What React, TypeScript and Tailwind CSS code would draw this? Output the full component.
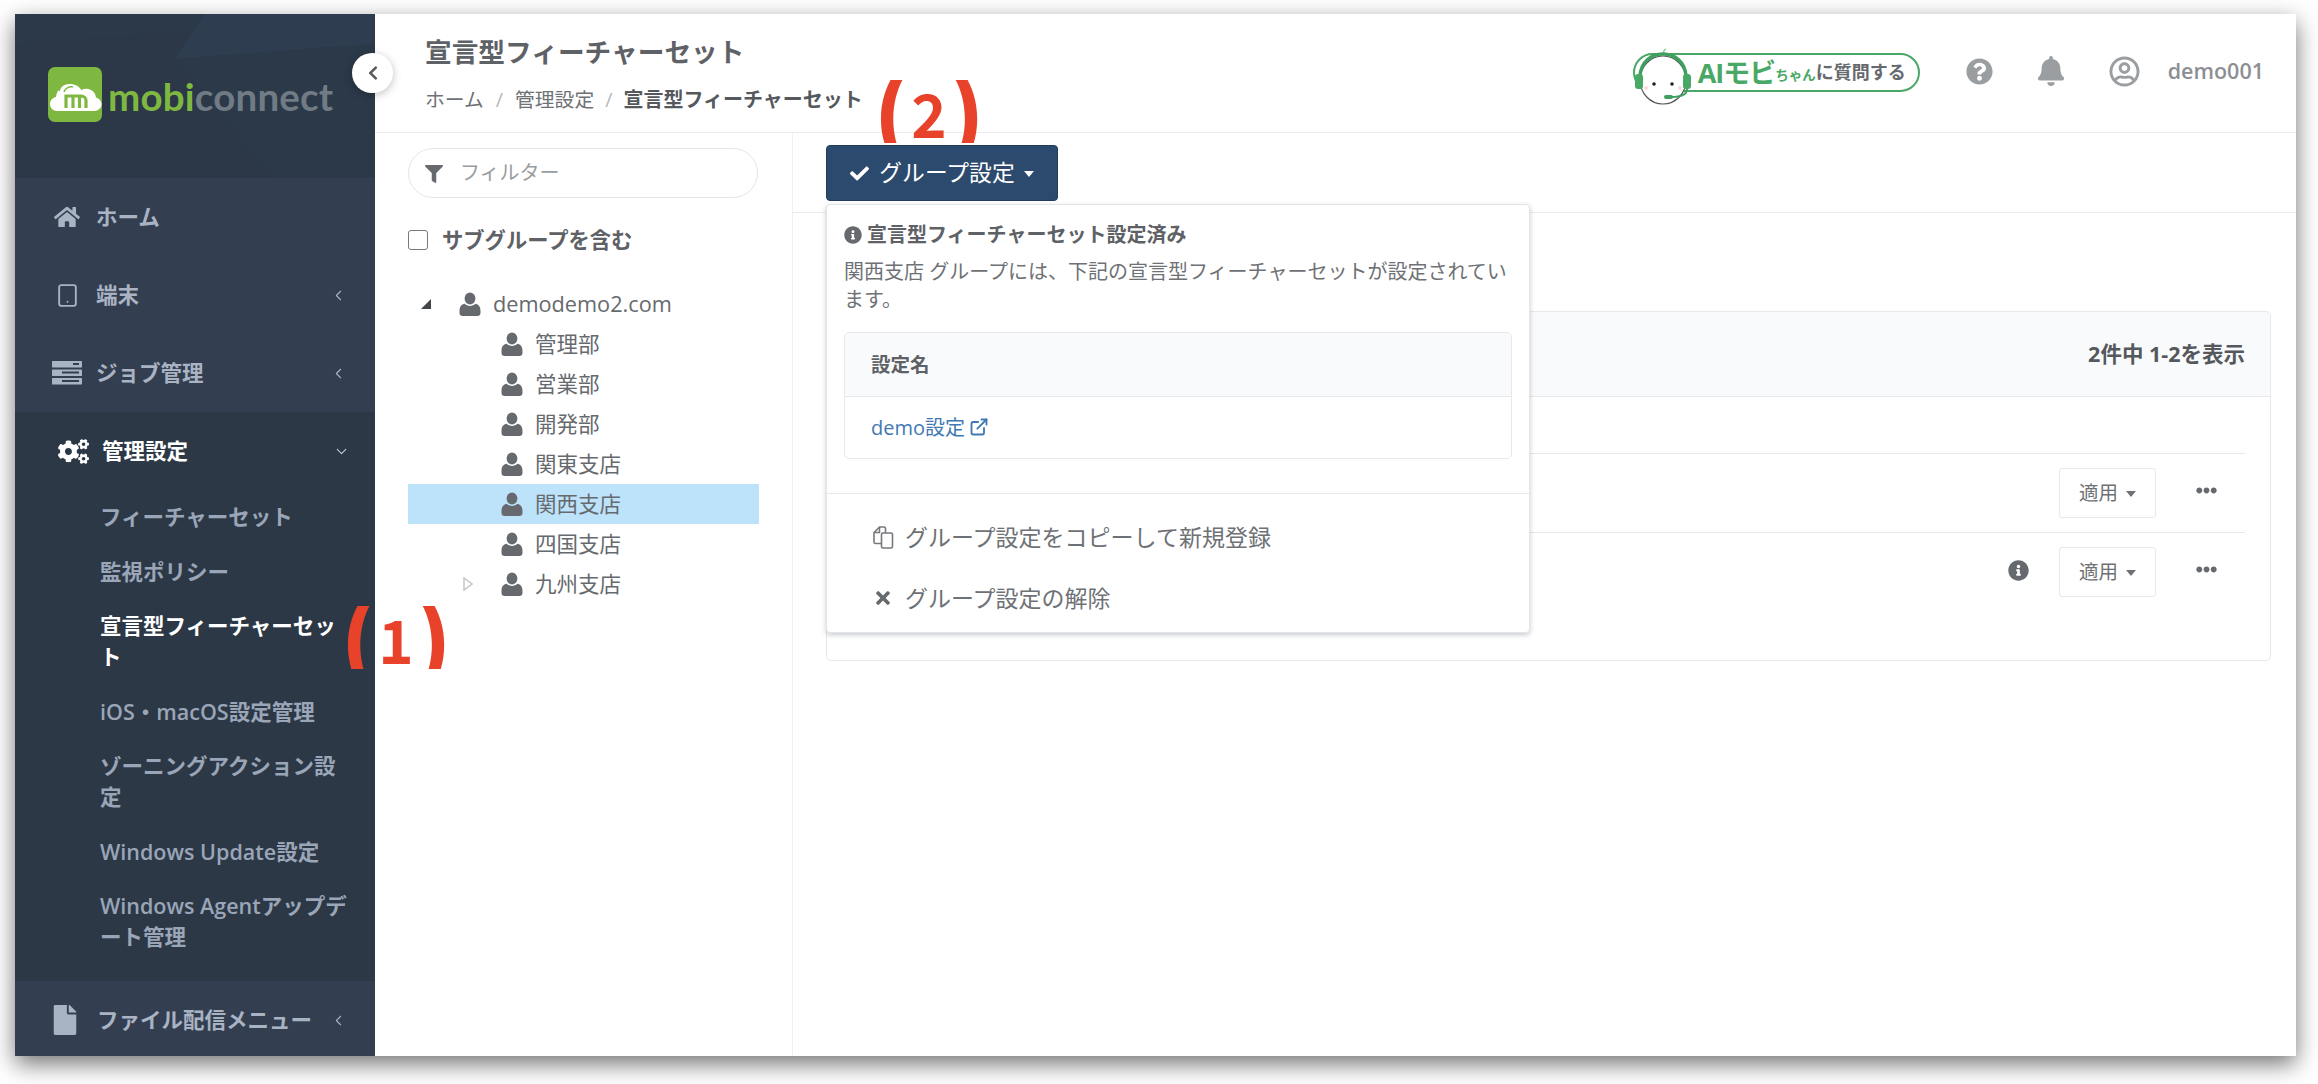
import React from 'react'
import { ChevronDown, ChevronLeft, ExternalLink, Tablet } from 'lucide-react'
import {
  FaBell,
  FaCheck,
  FaChevronLeft,
  FaCogs,
  FaEllipsisH,
  FaFile,
  FaFilter,
  FaHome,
  FaInfoCircle,
  FaQuestionCircle,
  FaRegUserCircle,
  FaTimes,
} from 'react-icons/fa'

const subItems = [
  { label: 'フィーチャーセット' },
  { label: '監視ポリシー' },
  { label: '宣言型フィーチャーセット', active: true },
  { label: 'iOS・macOS設定管理' },
  { label: 'ゾーニングアクション設定' },
  { label: 'Windows Update設定' },
  { label: 'Windows Agentアップデート管理' },
]

const groups = ['管理部', '営業部', '開発部', '関東支店', '関西支店', '四国支店', '九州支店']

function PersonIcon() {
  return (
    <svg viewBox="0 0 24 24" className="h-[24px] w-[24px] shrink-0 fill-[#666a6e]">
      <ellipse cx="12" cy="6.5" rx="5.4" ry="6" />
      <path d="M1.5 19c0-4.5 2-6.6 5.2-7.2 1.3 1.4 3.2 2.1 5.3 2.1s4-.7 5.3-2.1c3.2.6 5.2 2.7 5.2 7.2v2c0 1.7-1.3 3-3 3h-15c-1.7 0-3-1.3-3-3z" />
    </svg>
  )
}

function ServerIcon() {
  return (
    <svg viewBox="0 0 30 24" className="h-[24px] w-[30px] fill-[#a9b3c4]">
      <rect x="0" y="0" width="30" height="6.5" rx="0.6" />
      <rect x="0" y="8.5" width="30" height="6.5" rx="0.6" />
      <rect x="0" y="17" width="30" height="6.5" rx="0.6" />
      <rect x="21" y="2" width="6" height="2" fill="#333f50" />
      <rect x="10" y="10.5" width="17" height="2" fill="#333f50" />
      <rect x="10" y="19" width="17" height="2" fill="#333f50" />
    </svg>
  )
}

function CopyIcon() {
  return (
    <svg viewBox="0 0 24 24" className="mr-[10px] h-[24px] w-[24px] fill-none stroke-[#777a7d] stroke-[1.6]">
      <rect x="10.500" y="8" width="11" height="15" rx="1.500" />
      <path d="M14.500 8V3.500A1.500 1.500 0 0 0 13 2H8.500L3 7.500V17a1.500 1.500 0 0 0 1.500 1.500h6M8.500 2v5.500H3" />
    </svg>
  )
}

function LogoMark() {
  return (
    <div className="flex h-[55px] w-[54px] shrink-0 items-center justify-center rounded-[7px] bg-[#7fb840]">
      <svg viewBox="0 0 54 55" className="h-[55px] w-[54px]">
        <path
          d="M9 44c-4 0-7-3-7-7 0-3.500 2.500-6.300 6-7 .5-7 6.500-13 14-13 5 0 9 2.200 11.500 6 1.500-.8 3-1.200 4.800-1.200 5.200 0 9.200 3.700 9.700 8.700 3.300 1 5.500 3.700 5.500 6.800 0 4-3.500 6.700-7.500 6.700z"
          fill="#fff"
        />
        <path
          d="M18 41V29h15c3 0 5 2 5 4.500V41M25 41V30M31.500 41V30"
          fill="none"
          stroke="#7fb840"
          strokeWidth="3.200"
        />
        <path d="M11 24c2-7 8-11 15-9M16 25c1-3.500 5-6 9-5" fill="none" stroke="#7fb840" strokeWidth="1.500" />
      </svg>
    </div>
  )
}

function MobiFace() {
  return (
    <svg viewBox="0 0 60 64" className="absolute left-[-2px] top-[-9px] h-[64px] w-[60px]">
      <path d="M31 8c-1-2 0-4 2-5" fill="none" stroke="#8fd19e" strokeWidth="1.500" />
      <ellipse cx="30" cy="34" rx="23" ry="24" fill="#fff" stroke="#555" strokeWidth="1.200" />
      <path d="M7 30C8 16 18 8 30 8s22 8 23 22" fill="none" stroke="#3f9f5f" strokeWidth="3.500" />
      <rect x="2" y="28" width="8" height="15" rx="3" fill="#4aa866" />
      <rect x="50" y="28" width="8" height="15" rx="3" fill="#4aa866" />
      <path d="M54 43c0 5-6 8-16 8" fill="none" stroke="#3f9f5f" strokeWidth="2" />
      <rect x="31" y="49" width="9" height="4" rx="2" fill="#3f9f5f" />
      <circle cx="21" cy="38" r="1.800" fill="#222" />
      <circle cx="39" cy="38" r="1.800" fill="#222" />
      <circle cx="13" cy="42" r="2" fill="#fbdcdc" />
      <circle cx="47" cy="42" r="2" fill="#fbdcdc" />
    </svg>
  )
}

function NavRow({ icon, label, chevron = true }: { icon: React.ReactNode; label: string; chevron?: boolean }) {
  return (
    <div className="flex h-[78px] items-center text-[21.500px] font-semibold text-[#a9b3c4]">
      <div className="flex w-[81px] justify-center pl-[23px]">
        <div className="flex w-[58px] justify-center">{icon}</div>
      </div>
      <span className="flex-1 whitespace-nowrap">{label}</span>
      {chevron && <ChevronLeft size={17} strokeWidth={1.500} className="mr-[28px] text-[#a9b3c4]" />}
    </div>
  )
}

function Sidebar() {
  return (
    <aside className="flex w-[360px] shrink-0 flex-col">
      <div className="relative flex h-[165px] items-center overflow-hidden bg-[#2b3949] pb-[3px] pl-[33px]">
        <svg viewBox="0 0 360 165" className="absolute inset-0 h-full w-full">
          <path d="M0 30 200 15 160 45 260 165H0z" fill="#2c3848" />
          <path d="M190 0 160 45 360 30V0z" fill="#2e3d4f" />
        </svg>
        <div className="relative flex items-center gap-[6px]">
          <LogoMark />
          <div className="mt-[3px] font-['Lato',sans-serif] text-[38.500px] leading-none font-bold tracking-[0.2px] whitespace-nowrap">
            <span className="text-[#7fb840]">mobi</span>
            <span className="text-[#717b86]">connect</span>
          </div>
        </div>
      </div>

      <div className="bg-[#333f50]">
        <NavRow icon={<FaHome size={26} className="text-[#a9b3c4]" />} label="ホーム" chevron={false} />
        <NavRow icon={<Tablet size={25} strokeWidth={1.800} className="text-[#a9b3c4]" />} label="端末" />
        <NavRow icon={<ServerIcon />} label="ジョブ管理" />
      </div>

      <div className="bg-[#2c3846] pb-[16.500px]">
        <div className="flex h-[78px] items-center text-[21.500px] font-bold text-white">
          <FaCogs size={31} className="ml-[43px] mr-[13px] text-white" />
          <span className="flex-1">管理設定</span>
          <ChevronDown size={17} strokeWidth={1.500} className="mr-[25px] text-[#c8ced8]" />
        </div>
        {subItems.map((item) => (
          <div
            key={item.label}
            className={`w-[338px] pb-[12.500px] pl-[85px] pt-[11px] text-[21.500px] leading-[31px] break-all ${
              item.active ? 'font-bold text-white' : 'font-semibold text-[#9aa5b8]'
            }`}
          >
            {item.label}
          </div>
        ))}
      </div>

      <div className="flex-1 bg-[#333f50] pt-[3px]">
        <div className="flex h-[72px] items-center text-[21.500px] font-semibold text-[#a9b3c4]">
          <FaFile size={30} className="ml-[35px] mr-[17px] text-[#a9b3c4]" />
          <span className="flex-1 whitespace-nowrap">ファイル配信メニュー</span>
          <ChevronLeft size={17} strokeWidth={1.500} className="mr-[28px] text-[#a9b3c4]" />
        </div>
      </div>
    </aside>
  )
}

function TopBar() {
  return (
    <header className="flex h-[119px] shrink-0 justify-between border-b border-[#e9ebee] pl-[50px] pr-[32px]">
      <div>
        <div className="mt-[20px] text-[26.700px] leading-[36px] font-bold text-[#5e6165]">宣言型フィーチャーセット</div>
        <div className="mt-[15px] flex items-center text-[19.800px] leading-[30px] text-[#6e7175]">
          <span>ホーム</span>
          <span className="mx-[12px] text-[#b5b8bb]">/</span>
          <span>管理設定</span>
          <span className="mx-[11px] text-[#b5b8bb]">/</span>
          <span className="text-[20px] font-bold text-[#55585c]">宣言型フィーチャーセット</span>
        </div>
      </div>
      <div className="flex items-start pt-[39px]">
        <div className="relative mr-[46px] flex h-[39px] w-[287px] items-center rounded-full border-[2px] border-[#4aa866] pl-[63px]">
          <MobiFace />
          <span className="text-[27px] leading-none font-bold tracking-[-1px] text-[#4aa866]">AIモビ</span>
          <span className="mt-[6px] text-[13.500px] font-bold text-[#4aa866]">ちゃん</span>
          <span className="text-[18px] font-semibold text-[#666a6e]">に質問する</span>
        </div>
        <FaQuestionCircle size={27} className="mt-[5px] text-[#9b9ea1]" />
        <FaBell size={30} className="ml-[43px] mt-[3px] text-[#9b9ea1]" />
        <FaRegUserCircle size={31} className="ml-[43px] mt-[3px] text-[#9b9ea1]" />
        <span className="ml-[28px] mt-[3px] text-[21.500px] leading-[30px] font-semibold text-[#8c8f92]">demo001</span>
      </div>
    </header>
  )
}

function TreePanel() {
  return (
    <div className="w-[418px] shrink-0 border-r border-[#eef0f2] px-[33px] pt-[15px]">
      <div className="flex h-[50px] w-[350px] items-center rounded-full border border-[#e3e5e8] pl-[16px] text-[20px] text-[#9a9da0]">
        <FaFilter size={18} className="mr-[17px] mt-[2px] text-[#666a6e]" />
        フィルター
      </div>
      <div className="mt-[27px] flex h-[30px] items-center text-[21.300px] font-bold text-[#5e6165]">
        <span className="mr-[14px] h-[20px] w-[20px] rounded-[3px] border-[1.500px] border-[#77797c]" />
        サブグループを含む
      </div>
      <div className="mt-[29px] flex h-[40px] items-center text-[21.700px] text-[#666a6e]">
        <svg viewBox="0 0 10 10" className="ml-[13px] mr-[27px] h-[10px] w-[10px] fill-[#44474a]">
          <path d="M10 0v10H0z" />
        </svg>
        <PersonIcon />
        <span className="ml-[11px]">demodemo2.com</span>
      </div>
      {groups.map((name) => (
        <div
          key={name}
          className={`flex h-[40px] items-center pl-[92px] text-[21.500px] text-[#666a6e] ${
            name === '関西支店' ? 'bg-[#bde3fb]' : ''
          }`}
        >
          <PersonIcon />
          <span className="ml-[11px]">{name}</span>
          {name === '九州支店' && (
            <svg viewBox="0 0 10 14" className="absolute ml-[-37px] h-[14px] w-[10px]">
              <path d="M1 1l8 6-8 6z" fill="#fff" stroke="#c3c6c9" strokeWidth="1.500" />
            </svg>
          )}
        </div>
      ))}
    </div>
  )
}

function GroupMenu() {
  return (
    <div className="absolute left-0 top-[59px] z-10 h-[429px] w-[704px] rounded-[4px] border border-[#e3e5e8] bg-white pt-[15px] shadow-[0_2px_5px_rgba(60,70,90,0.28)]">
      <div className="px-[17px]">
        <div className="flex h-[30px] items-center text-[20px] font-bold text-[#5e6165]">
          <FaInfoCircle size={18} className="mr-[5px] text-[#666a6e]" />
          宣言型フィーチャーセット設定済み
        </div>
        <p className="mt-[8px] text-[20px] leading-[28px] text-[#6e7175]">
          関西支店 グループには、下記の宣言型フィーチャーセットが設定されています。
        </p>
        <div className="mt-[18px] h-[127px] rounded-[5px] border border-[#e6e8eb]">
          <div className="flex h-[64px] items-center rounded-t-[5px] border-b border-[#e6e8eb] bg-[#f9fafb] pl-[26px] text-[19.500px] font-bold text-[#5e6165]">
            設定名
          </div>
          <div className="flex h-[61px] items-center pl-[26px] text-[20px] text-[#3f78b5]">
            demo設定
            <ExternalLink size={20} strokeWidth={2.200} className="ml-[4px] mt-[-2px]" />
          </div>
        </div>
      </div>
      <div className="mt-[34px] border-t border-[#e6e8eb] pl-[44px] pt-[13px] text-[23px] text-[#6e7175]">
        <div className="flex h-[60px] items-center">
          <CopyIcon />
          グループ設定をコピーして新規登録
        </div>
        <div className="flex h-[62px] items-center">
          <FaTimes size={20} className="ml-[2px] mr-[12px] text-[#666a6e]" />
          グループ設定の解除
        </div>
      </div>
    </div>
  )
}

function ApplyRow({ info }: { info?: boolean }) {
  return (
    <div className="flex h-[79px] items-center justify-end border-t border-[#e6e8eb]">
      {info && <FaInfoCircle size={21} className="mr-[30px] mt-[-3px] text-[#666a6e]" />}
      <div className="flex h-[50px] w-[97px] items-center justify-center rounded-[3px] border border-[#e6e8eb] text-[19.500px] text-[#6e7175]">
        適用
        <span className="ml-[8px] mt-[2px] h-0 w-0 border-x-[5px] border-t-[6px] border-x-transparent border-t-[#6e7175]" />
      </div>
      <FaEllipsisH size={21} className="ml-[40px] mr-[28px] mt-[-5px] text-[#666a6e]" />
    </div>
  )
}

function Content() {
  return (
    <div className="flex-1">
      <div className="flex h-[80px] items-start border-b border-[#e9ebee] pl-[33px] pt-[12px]">
        <div className="relative">
          <div className="flex h-[56px] w-[232px] items-center justify-center rounded-[4px] border border-[#233c5c] bg-[#2c4a6e] text-[22.800px] text-white">
            <FaCheck size={19} className="mr-[10px]" />
            グループ設定
            <span className="ml-[9px] mt-[2px] h-0 w-0 border-x-[5px] border-t-[6px] border-x-transparent border-t-white" />
          </div>
          <GroupMenu />
        </div>
      </div>
      <div className="ml-[33px] mt-[98px] h-[350px] w-[1445px] rounded-[5px] border border-[#e6e8eb]">
        <div className="flex h-[85px] items-center justify-end rounded-t-[5px] border-b border-[#e6e8eb] bg-[#f9fafb] pr-[25px] text-[21.500px] font-bold text-[#55585c]">
          2件中 1-2を表示
        </div>
        <div className="px-[25px] pt-[56px]">
          <ApplyRow />
          <ApplyRow info />
        </div>
      </div>
    </div>
  )
}

function Callout({ digit, className }: { digit: string; className: string }) {
  return (
    <div
      className={`absolute flex h-[63px] w-[104px] items-center justify-center overflow-hidden font-['Noto_Sans_CJK_JP',sans-serif] text-[60px] leading-none font-bold whitespace-nowrap text-[#e8432a] ${className}`}
    >
      <span className="mt-[-6px] text-[86px] font-black">(</span>
      <span className="mx-[3px]">{digit}</span>
      <span className="mt-[-6px] text-[86px] font-black">)</span>
    </div>
  )
}

export default function App() {
  return (
    <div className="min-h-screen bg-white pl-[15px] pt-[14px] font-['Open_Sans','Noto_Sans_CJK_JP',sans-serif]">
      <div className="relative flex h-[1042px] w-[2281px] bg-white shadow-[0_8px_22px_rgba(0,0,0,0.55)]">
        <Sidebar />
        <main className="flex min-w-0 flex-1 flex-col">
          <TopBar />
          <div className="flex flex-1">
            <TreePanel />
            <Content />
          </div>
        </main>
        <button className="absolute left-[337px] top-[39px] flex h-[40px] w-[41px] items-center justify-center rounded-full bg-white text-[#55585c] shadow-[0_2px_8px_rgba(0,0,0,0.25)]">
          <FaChevronLeft size={16} />
        </button>
        <Callout digit="1" className="left-[329px] top-[592px]" />
        <Callout digit="2" className="left-[862px] top-[66px]" />
        <Callout digit="3" className="left-[1107px] top-[555px]" />
      </div>
    </div>
  )
}
